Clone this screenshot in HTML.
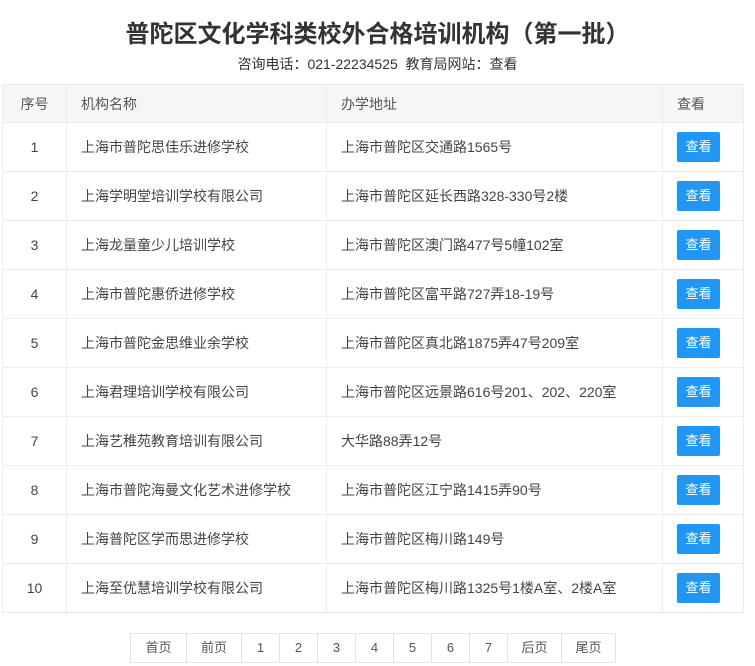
<!DOCTYPE html>
<html><head><meta charset="utf-8"><style>
*{margin:0;padding:0;box-sizing:border-box}
body{width:755px;height:666px;background:#fff;font-family:"Liberation Sans","Noto Sans CJK SC",sans-serif;color:#444;overflow:hidden;position:relative}
h1{position:absolute;top:14px;left:0;width:755px;text-align:center;font-size:24px;font-weight:bold;color:#333}
.sub{position:absolute;top:54px;left:0;width:755px;text-align:center;font-size:14px;color:#333}
table{position:absolute;left:2px;top:84px;width:742px;border-collapse:collapse;font-size:14px}
td,th{border:1px solid #ececec;font-weight:normal;text-align:left;padding-left:14px;color:#444}
th{background:#f6f6f6;height:38px;color:#555}
td{height:49px}
td.n,th.n{text-align:center;padding-left:0}
.b{display:inline-block;width:43px;height:30px;line-height:30px;text-align:center;background:#2196f3;color:#fff;border-radius:2px;font-size:13px}
.pg{position:absolute;left:130px;top:633px;height:30px;display:flex;border:1px solid #e2e2e2}
.pg div{height:28px;line-height:28px;text-align:center;font-size:13px;color:#555;border-left:1px solid #e2e2e2}
.pg div:first-child{border-left:none}
</style></head><body>
<h1>普陀区文化学科类校外合格培训机构（第一批）</h1>
<div class="sub">咨询电话：021-22234525&nbsp; 教育局网站：查看</div>
<table>
<tr><th class="n" style="width:64px">序号</th><th style="width:260px">机构名称</th><th style="width:336px">办学地址</th><th>查看</th></tr>
<tr><td class="n">1</td><td>上海市普陀思佳乐进修学校</td><td>上海市普陀区交通路1565号</td><td><span class="b">查看</span></td></tr>
<tr><td class="n">2</td><td>上海学明堂培训学校有限公司</td><td>上海市普陀区延长西路328-330号2楼</td><td><span class="b">查看</span></td></tr>
<tr><td class="n">3</td><td>上海龙量童少儿培训学校</td><td>上海市普陀区澳门路477号5幢102室</td><td><span class="b">查看</span></td></tr>
<tr><td class="n">4</td><td>上海市普陀惠侨进修学校</td><td>上海市普陀区富平路727弄18-19号</td><td><span class="b">查看</span></td></tr>
<tr><td class="n">5</td><td>上海市普陀金思维业余学校</td><td>上海市普陀区真北路1875弄47号209室</td><td><span class="b">查看</span></td></tr>
<tr><td class="n">6</td><td>上海君理培训学校有限公司</td><td>上海市普陀区远景路616号201、202、220室</td><td><span class="b">查看</span></td></tr>
<tr><td class="n">7</td><td>上海艺稚苑教育培训有限公司</td><td>大华路88弄12号</td><td><span class="b">查看</span></td></tr>
<tr><td class="n">8</td><td>上海市普陀海曼文化艺术进修学校</td><td>上海市普陀区江宁路1415弄90号</td><td><span class="b">查看</span></td></tr>
<tr><td class="n">9</td><td>上海普陀区学而思进修学校</td><td>上海市普陀区梅川路149号</td><td><span class="b">查看</span></td></tr>
<tr><td class="n">10</td><td>上海至优慧培训学校有限公司</td><td>上海市普陀区梅川路1325号1楼A室、2楼A室</td><td><span class="b">查看</span></td></tr>
</table>
<div class="pg">
<div style="width:55px">首页</div><div style="width:55px">前页</div>
<div style="width:38px">1</div><div style="width:38px">2</div><div style="width:38px">3</div><div style="width:38px">4</div><div style="width:38px">5</div><div style="width:38px">6</div><div style="width:38px">7</div>
<div style="width:54px">后页</div><div style="width:54px">尾页</div>
</div>
</body></html>
